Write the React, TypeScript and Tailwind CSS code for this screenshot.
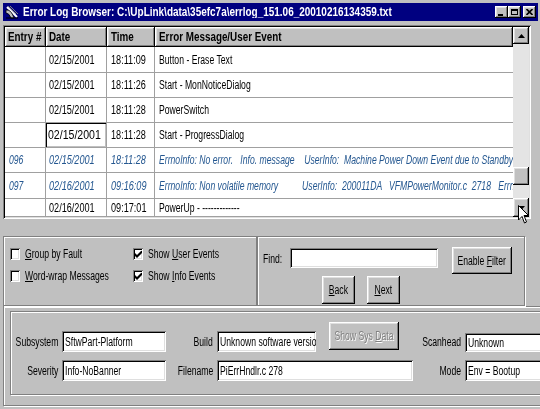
import React from "react";

const font = "font-['Liberation_Sans',Arial,sans-serif]";
const raised =
  "bg-[#c0c0c0] shadow-[inset_-1px_-1px_#000000,inset_1px_1px_#ffffff,inset_-2px_-2px_#808080,inset_2px_2px_#dfdfdf]";
const sunken =
  "bg-white shadow-[inset_1px_1px_#808080,inset_-1px_-1px_#ffffff,inset_2px_2px_#000000,inset_-2px_-2px_#dfdfdf]";
const sunkenGray =
  "bg-[#c0c0c0] shadow-[inset_1px_1px_#808080,inset_-1px_-1px_#ffffff,inset_2px_2px_#000000,inset_-2px_-2px_#dfdfdf]";
const etched = "border border-[#808080] shadow-[inset_1px_1px_#ffffff,1px_1px_#ffffff]";

// the screenshot is squeezed sideways, so text is drawn narrow
function T({
  children,
  className = "origin-left scale-x-[0.72]",
}: {
  children: React.ReactNode;
  className?: string;
}) {
  return <span className={`inline-block whitespace-pre ${className}`}>{children}</span>;
}

type Row = {
  entry?: string;
  date: string;
  time: string;
  msg: string;
  info?: boolean;
  editing?: boolean;
  h: string;
};

const rows: Row[] = [
  { date: "02/15/2001", time: "18:11:09", msg: "Button - Erase Text", h: "h-[26px]" },
  { date: "02/15/2001", time: "18:11:26", msg: "Start - MonNoticeDialog", h: "h-[25px]" },
  { date: "02/15/2001", time: "18:11:28", msg: "PowerSwitch", h: "h-[25px]" },
  { date: "02/15/2001", time: "18:11:28", msg: "Start - ProgressDialog", editing: true, h: "h-[25px]" },
  {
    entry: "096",
    date: "02/15/2001",
    time: "18:11:28",
    msg: "ErrnoInfo: No error.   Info. message    UserInfo:  Machine Power Down Event due to Standby",
    info: true,
    h: "h-[25px]",
  },
  {
    entry: "097",
    date: "02/16/2001",
    time: "09:16:09",
    msg: "ErrnoInfo: Non volatile memory          UserInfo:  200011DA   VFMPowerMonitor.c  2718   ErrnoInfo",
    info: true,
    h: "h-[26px]",
  },
  { date: "02/16/2001", time: "09:17:01", msg: "PowerUp - -------------", h: "h-[18px]" },
];

function DishIcon() {
  return (
    <svg width="14" height="14" viewBox="0 0 14 14" className="shrink-0">
      <path d="M2 2 L12 12" stroke="#ffffff" strokeWidth="2" />
      <path d="M1 5 Q6 4 9 13 L6 13 Q4 8 1 8 Z" fill="#c0c0c0" stroke="#000" strokeWidth="0.8" />
      <path d="M3 1 L11 9 M5 1 L13 9" stroke="#808080" strokeWidth="1" />
      <path d="M1 13 L13 13" stroke="#000" strokeWidth="1" />
    </svg>
  );
}

function TitleBtn({ children }: { children: React.ReactNode }) {
  return <div className={`w-[13px] h-[12px] ${raised} flex items-center justify-center`}>{children}</div>;
}

function Check({ checked, children }: { checked?: boolean; children: React.ReactNode }) {
  return (
    <div className="flex items-center h-[12px]">
      <div className={`w-[10px] h-[12px] ${sunken} flex items-center justify-center shrink-0`}>
        {checked && (
          <svg width="7" height="7" viewBox="0 0 7 7">
            <path d="M0 2 L2 4 L7 -1 L7 2 L2 7 L0 5 Z" fill="#000" />
          </svg>
        )}
      </div>
      <span className="ml-[5px]">
        <T>{children}</T>
      </span>
    </div>
  );
}

function Field({ children, className }: { children: React.ReactNode; className: string }) {
  return (
    <div className={`${sunken} ${className} flex items-center pl-[3px] overflow-hidden`}>
      <T>{children}</T>
    </div>
  );
}

function Label({ children }: { children: React.ReactNode }) {
  return (
    <div className="flex items-center justify-end pr-[4px] whitespace-nowrap">
      <T className="origin-right scale-x-[0.72]">{children}</T>
    </div>
  );
}

function Button({ children, className }: { children: React.ReactNode; className: string }) {
  return (
    <div className={`${raised} ${className} flex items-center justify-center`}>
      <T className="origin-center scale-x-[0.72]">{children}</T>
    </div>
  );
}

export default function App() {
  return (
    <div
      className={`w-[540px] h-[409px] bg-[#c0c0c0] relative overflow-hidden p-[3px] text-[12px] leading-none text-black ${font}`}
    >
      {/* title bar */}
      <div className="h-[18px] w-[535px] bg-[#000080] flex items-center pl-[2px] pr-[2px]">
        <DishIcon />
        <span className="ml-[4px] text-white font-bold text-[12px] flex-1 overflow-hidden">
          <T className="origin-left scale-x-[0.83]">
            {"Error Log Browser: C:\\UpLink\\data\\35efc7a\\errlog_151.06_20010216134359.txt"}
          </T>
        </span>
        <div className="flex items-center">
          <TitleBtn>
            <div className="w-[5px] h-[2px] bg-black mt-[5px] mr-[2px]" />
          </TitleBtn>
          <TitleBtn>
            <div className="w-[7px] h-[6px] border border-black border-t-2" />
          </TitleBtn>
          <div className="w-[2px]" />
          <TitleBtn>
            <svg width="7" height="6" viewBox="0 0 7 6">
              <path d="M0.5 0 L6.5 6 M6.5 0 L0.5 6" stroke="#000" strokeWidth="1.6" />
            </svg>
          </TitleBtn>
        </div>
      </div>

      {/* log grid */}
      <div className={`mt-[4px] w-[528px] h-[194px] p-[2px] ${sunkenGray}`}>
        <div className="flex h-full bg-white">
          <div className="flex-1 flex flex-col overflow-hidden">
            <div className="grid grid-cols-[41px_61px_48px_1fr] h-[20px] shrink-0 font-bold">
              <div className={`${raised} flex items-center pl-[3px] overflow-hidden`}>
                <T className="origin-left scale-x-[0.82]">Entry #</T>
              </div>
              <div className={`${raised} flex items-center pl-[3px]`}>
                <T className="origin-left scale-x-[0.82]">Date</T>
              </div>
              <div className={`${raised} flex items-center pl-[4px]`}>
                <T className="origin-left scale-x-[0.82]">Time</T>
              </div>
              <div className={`${raised} flex items-center pl-[4px]`}>
                <T className="origin-left scale-x-[0.82]">Error Message/User Event</T>
              </div>
            </div>
            {rows.map((r, i) => (
              <div
                key={i}
                className={`grid grid-cols-[41px_61px_48px_1fr] shrink-0 ${r.h} ${
                  r.info ? "italic text-[#245790]" : "text-black"
                }`}
              >
                <div className="border-r border-b border-[#a0a0a0] flex items-center pl-[4px]">
                  <T>{r.entry}</T>
                </div>
                {r.editing ? (
                  <div className="border-r border-b border-[#a0a0a0] flex items-center pl-[2px] shadow-[inset_1px_1px_#000000,inset_-1px_-1px_#c0c0c0]">
                    <T className="origin-left scale-x-[0.88]">{r.date}</T>
                  </div>
                ) : (
                  <div className="border-r border-b border-[#a0a0a0] flex items-center pl-[3px]">
                    <T className="origin-left scale-x-[0.76]">{r.date}</T>
                  </div>
                )}
                <div className="border-r border-b border-[#a0a0a0] flex items-center pl-[4px]">
                  <T className="origin-left scale-x-[0.76]">{r.time}</T>
                </div>
                <div className="border-b border-[#a0a0a0] flex items-center pl-[4px] overflow-hidden">
                  <T>{r.msg}</T>
                </div>
              </div>
            ))}
          </div>

          {/* scrollbar */}
          <div className="w-[16px] flex flex-col bg-[#e4e4e4]">
            <div className={`h-[17px] ${raised} flex items-center justify-center`}>
              <svg width="7" height="4" viewBox="0 0 7 4">
                <path d="M3.5 0 L7 4 L0 4 Z" fill="#000" />
              </svg>
            </div>
            <div className="flex-1">
              <div className={`mt-[123px] h-[18px] ${raised}`} />
            </div>
            <div className={`h-[19px] ${raised} flex items-center justify-center`}>
              <svg width="7" height="4" viewBox="0 0 7 4">
                <path d="M0 0 L7 0 L3.5 4 Z" fill="#000" />
              </svg>
            </div>
          </div>
        </div>
      </div>

      {/* options + find */}
      <div className="mt-[17px] flex h-[70px]">
        <div className={`w-[254px] ${etched} pt-[11px] pl-[6px]`}>
          <div className="flex flex-col gap-[10px]">
            <div className="flex">
              <div className="w-[123px]">
                <Check>
                  <span className="underline">G</span>roup by Fault
                </Check>
              </div>
              <Check checked>
                Show <span className="underline">U</span>ser Events
              </Check>
            </div>
            <div className="flex">
              <div className="w-[123px]">
                <Check>
                  <span className="underline">W</span>ord-wrap Messages
                </Check>
              </div>
              <Check checked>
                Show <span className="underline">I</span>nfo Events
              </Check>
            </div>
          </div>
        </div>
        <div className={`w-[268px] ${etched} pt-[10px] pl-[5px]`}>
          <div className="flex items-start">
            <div className="w-[27px] mt-[6px]">
              <T>Find:</T>
            </div>
            <div className={`${sunken} w-[148px] h-[20px] mt-[1px]`} />
            <Button className="ml-[14px] w-[60px] h-[27px]">
              Enable <span className="underline">F</span>ilter
            </Button>
          </div>
          <div className="flex mt-[2px] ml-[59px] gap-[12px]">
            <Button className="w-[33px] h-[28px]">
              <span className="underline">B</span>ack
            </Button>
            <Button className="w-[33px] h-[28px]">
              <span className="underline">N</span>ext
            </Button>
          </div>
        </div>
      </div>

      {/* details */}
      <div className={`w-[545px] h-[100px] ${etched} pt-[4px] pl-[6px]`}>
        <div className={`w-[535px] h-[84px] ${etched} pt-[19px] pl-[1px]`}>
          <div className="grid grid-cols-[50px_104px_51px_99px_97px_52px_80px] grid-rows-[21px_21px] gap-y-[8px]">
            <Label>Subsystem</Label>
            <Field className="h-[21px]">SftwPart-Platform</Field>
            <Label>Build</Label>
            <Field className="h-[21px]">Unknown software version</Field>
            <div className="pl-[13px]">
              <div
                className={`${raised} w-[70px] h-[28px] -mt-[9px] flex items-center justify-center text-[#808080] [text-shadow:1px_1px_0_#ffffff]`}
              >
                <T className="origin-center scale-x-[0.72]">
                  Show Sys <span className="underline">D</span>ata
                </T>
              </div>
            </div>
            <Label>Scanhead</Label>
            <Field className="h-[19px] mt-[2px]">Unknown</Field>

            <Label>Severity</Label>
            <Field className="h-[21px]">Info-NoBanner</Field>
            <Label>Filename</Label>
            <Field className="h-[21px] col-span-2 w-[196px]">PiErrHndlr.c 278</Field>
            <Label>Mode</Label>
            <Field className="h-[21px]">Env = Bootup</Field>
          </div>
        </div>
      </div>

      {/* mouse pointer over the scroll arrow */}
      <svg className="absolute left-[518px] top-[205px]" width="12" height="20" viewBox="0 0 12 20">
        <path
          d="M0.5 0.5 L0.5 15 L4 11.5 L6.5 18 L8.5 17 L6 10.5 L10.5 10.5 Z"
          fill="#ffffff"
          stroke="#000"
          strokeWidth="1"
        />
      </svg>
    </div>
  );
}
